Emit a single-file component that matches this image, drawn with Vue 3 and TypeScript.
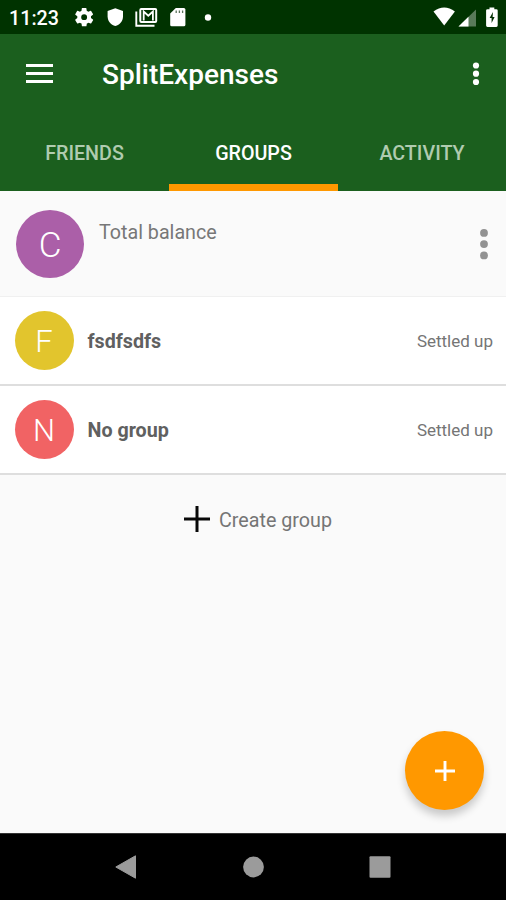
<script setup lang="ts">
import { ref } from 'vue'

interface Group {
  name: string
  initial: string
  tone: string
  status: string
}

const tabs: string[] = ['FRIENDS', 'GROUPS', 'ACTIVITY']
const activeTab = ref('GROUPS')
const groups: Group[] = [
  { name: 'fsdfsdfs', initial: 'F', tone: 'yellow', status: 'Settled up' },
  { name: 'No group', initial: 'N', tone: 'red', status: 'Settled up' },
]
</script>

<template>
  <div class="screen">
    <div class="status-bar">
      <span class="clock">11:23</span>
      <svg class="status-icons" width="146" height="34" viewBox="0 0 146 34" fill="#fff">
        <g transform="translate(3.1 6.1) scale(.92)">
          <path d="M19.4 13c.04-.3.06-.65.06-1s-.02-.7-.07-1l2.1-1.65a.5.5 0 0 0 .12-.64l-2-3.46a.5.5 0 0 0-.6-.22l-2.5 1a7.3 7.3 0 0 0-1.7-.98l-.38-2.65A.5.5 0 0 0 14 2h-4a.5.5 0 0 0-.5.42l-.37 2.65a7.7 7.7 0 0 0-1.7.98l-2.48-1a.5.5 0 0 0-.61.22l-2 3.46a.5.5 0 0 0 .12.64L4.6 11a8 8 0 0 0 0 2l-2.11 1.65a.5.5 0 0 0-.12.64l2 3.46c.12.22.38.3.6.22l2.5-1c.52.4 1.08.73 1.7.98l.37 2.65c.04.24.25.42.5.42h4c.25 0 .46-.18.5-.42l.38-2.65a7.3 7.3 0 0 0 1.69-.98l2.5 1c.22.08.48 0 .6-.22l2-3.46a.5.5 0 0 0-.12-.64zM12 15.2a3.2 3.2 0 1 1 0-6.4 3.2 3.2 0 0 1 0 6.4z" />
        </g>
        <path d="M45.3 8.2L53 11v5.3c0 5-3.2 8.4-7.7 9.8-4.5-1.4-7.700-4.800-7.700-9.800V11z" />
        <path d="M66.3 11.5V25.7H84.5" fill="none" stroke="#fff" stroke-width="1.9" />
        <rect x="70.3" y="9" width="15.9" height="13" rx="1" fill="none" stroke="#fff" stroke-width="2" />
        <path d="M73.7 20.5V11.5L78.3 15.7 82.9 11.5V20.5" fill="none" stroke="#fff" stroke-width="1.8" />
        <path d="M105.8 8h8.100a1.500 1.500 0 0 1 1.500 1.500v15.300a1.500 1.500 0 0 1-1.500 1.500h-12.200a1.500 1.500 0 0 1-1.500-1.500V13.400z" />
        <path d="M106.2 10.400v2.500M109.400 10.400v2.500M112.600 10.400v2.500" stroke="#5a735a" stroke-width="1.3" />
        <circle cx="138" cy="17.5" r="3.2" />
      </svg>
      <svg class="signal-icons" width="68" height="34" viewBox="0 0 68 34" fill="#fff">
        <path d="M.5 11.5Q11.2 3.7 21.9 11.5L11.2 25.5z" />
        <path d="M43 9.5V26.5H25.500z" opacity=".35" />
        <path d="M35.5 16.8V26.5H25.500z" />
        <path d="M54.5 9.200h2V7.500h4.800v1.700h2a1.400 1.400 0 0 1 1.400 1.400v14.900a1.400 1.400 0 0 1-1.400 1.400h-8.800a1.400 1.400 0 0 1-1.400-1.400V10.600a1.400 1.400 0 0 1 1.400-1.400z" />
        <path d="M60 12l-3.400 6h2v5l3-6h-2z" fill="#032f03" />
      </svg>
    </div>

    <header class="app-bar">
      <div class="toolbar">
        <svg class="menu" width="27" height="20" viewBox="0 0 27 20">
          <path d="M0 1.500H27M0 9.500H27M0 17.500H27" stroke="#fff" stroke-width="3" />
        </svg>
        <h1>SplitExpenses</h1>
        <svg class="more" width="8" height="26" viewBox="0 0 8 26" fill="#fff">
          <circle cx="4" cy="4.500" r="3.100" /><circle cx="4" cy="12.700" r="3.100" /><circle cx="4" cy="21" r="3.100" />
        </svg>
      </div>
      <nav class="tabs">
        <button v-for="tab in tabs" :key="tab" class="tab" :class="{ active: tab === activeTab }" @click="activeTab = tab">
          <span>{{ tab }}</span>
        </button>
      </nav>
    </header>

    <main class="content">
      <section class="summary">
        <div class="avatar large purple">C</div>
        <span class="summary-label">Total balance</span>
        <svg class="summary-more" width="10" height="32" viewBox="0 0 10 32" fill="#929292">
          <circle cx="5" cy="4.900" r="3.900" /><circle cx="5" cy="16.100" r="3.900" /><circle cx="5" cy="27.400" r="3.900" />
        </svg>
      </section>
      <section v-for="group in groups" :key="group.name" class="row">
        <div class="avatar" :class="group.tone">{{ group.initial }}</div>
        <span class="name">{{ group.name }}</span>
        <span class="settled">{{ group.status }}</span>
      </section>
      <div class="create">
        <svg width="26" height="26" viewBox="0 0 26 26">
          <path d="M13 0V26M0 13H26" stroke="#080808" stroke-width="3" />
        </svg>
        <span>Create group</span>
      </div>
      <button class="fab" aria-label="Add">
        <svg width="20" height="20" viewBox="0 0 20 20">
          <path d="M10 0V20M0 10H20" stroke="#fff" stroke-width="2.900" />
        </svg>
      </button>
    </main>

    <footer class="nav-bar">
      <svg width="22" height="24" viewBox="0 0 22 24"><path d="M20.5.8V23.200L.8 12z" fill="#9b9b9b" stroke="#9b9b9b" stroke-linejoin="round" /></svg>
      <svg width="22" height="24" viewBox="0 0 22 24"><circle cx="11.5" cy="12" r="10.4" fill="#9b9b9b" /></svg>
      <svg width="22" height="24" viewBox="0 0 22 24"><rect x=".5" y="1.3" width="21" height="21.5" rx="1" fill="#9b9b9b" /></svg>
    </footer>
  </div>
</template>

<style>
body {
  margin: 0;
}
</style>

<style scoped>
.screen {
  display: flex;
  flex-direction: column;
  width: 506px;
  height: 900px;
  overflow: hidden;
  background: #fafafa;
  font-family: Roboto, "Liberation Sans", sans-serif;
}
.status-bar {
  display: flex;
  flex: none;
  height: 34px;
  background: #003300;
  color: #fff;
}
.clock {
  width: 61px;
  padding-left: 9px;
  font-size: 19.7px;
  font-weight: 500;
  line-height: 37px;
}
.status-icons {
  flex: none;
}
.signal-icons {
  flex: none;
  margin: 0 5px 0 auto;
}
.app-bar {
  flex: none;
  height: 157px;
  background: #1b5f1e;
}
.toolbar {
  display: flex;
  align-items: center;
  height: 79px;
  padding: 0 26px;
}
h1 {
  flex: 1;
  margin: 3px 0 0 49px;
  color: #fff;
  font-size: 28px;
  font-weight: 500;
  line-height: 32px;
}
.tabs {
  display: grid;
  grid-template-columns: 169px 169px 168px;
  height: 78px;
}
.tab {
  box-sizing: border-box;
  padding: 11px 0 0;
  border: 0;
  border-bottom: 7px solid transparent;
  background: none;
  color: #b0cbb0;
  font: 500 19.7px/24px Roboto, "Liberation Sans", sans-serif;
}
.tab.active {
  border-color: #ff9800;
  color: #fff;
}
.content {
  position: relative;
  flex: 1;
}
.summary {
  box-sizing: border-box;
  display: flex;
  height: 106px;
  padding: 19px 17px 0 16px;
  border-bottom: 1px solid #f0f0f0;
}
.avatar {
  display: flex;
  flex: none;
  align-items: center;
  justify-content: center;
  box-sizing: border-box;
  width: 59px;
  height: 59px;
  padding-top: 1px;
  border-radius: 50%;
  color: #fff;
  font-size: 31px;
  font-weight: 300;
}
.avatar.large {
  width: 68px;
  height: 68px;
  padding-top: 2px;
  font-size: 35px;
}
.purple {
  background: #ab5fa8;
}
.yellow {
  background: #e2c52d;
}
.red {
  background: #f16364;
}
.summary-label {
  flex: 1;
  padding: 11px 0 0 15px;
  color: #777;
  font-size: 19.7px;
  line-height: 24px;
}
.summary-more {
  margin-top: 18px;
}
.row {
  box-sizing: border-box;
  display: flex;
  align-items: center;
  height: 89px;
  padding: 0 13px 0 14.5px;
  border-bottom: 2px solid #dedede;
  background: #fff;
}
.name {
  flex: 1;
  padding: 2px 0 0 14px;
  color: #606060;
  font-size: 19.7px;
  font-weight: 700;
}
.settled {
  padding-top: 1px;
  color: #757575;
  font-size: 17px;
}
.create {
  display: flex;
  align-items: center;
  justify-content: center;
  gap: 9px;
  height: 26px;
  margin-top: 31px;
  padding-left: 10px;
  color: #757575;
  font-size: 19.7px;
}
.create span {
  padding-top: 2px;
}
.fab {
  position: absolute;
  right: 22px;
  bottom: 23px;
  display: flex;
  align-items: center;
  justify-content: center;
  width: 79px;
  height: 79px;
  padding: 0;
  border: 0;
  border-radius: 50%;
  background: #ff9800;
  box-shadow: 0 6px 9px rgba(0, 0, 0, 0.2);
}
.nav-bar {
  box-sizing: border-box;
  display: flex;
  flex: none;
  align-items: center;
  justify-content: space-between;
  height: 67px;
  padding: 0 115px;
  border-top: 1px solid #333;
  background: #000;
}
</style>
